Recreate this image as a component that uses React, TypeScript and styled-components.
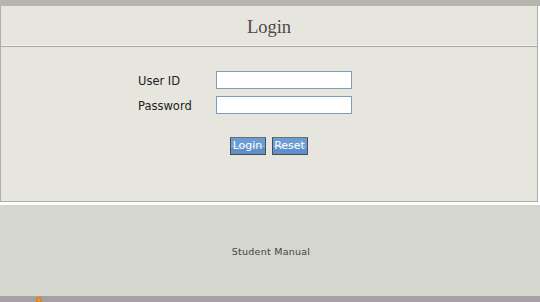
import React from 'react';
import styled, {createGlobalStyle} from 'styled-components';

const Global = createGlobalStyle`
  html, body {
    margin: 0;
    padding: 0;
    background: #ffffff;
  }
`;

const Page = styled.div`
  width: 540px;
  height: 302px;
  display: flex;
  flex-direction: column;
  overflow: hidden;
`;

const TopBar = styled.div`
  height: 6px;
  background: #b5b4ae;
`;

const Panel = styled.div`
  width: 536px;
  border: 1px solid #aeada7;
  border-top: none;
  background: #e6e5de;
`;

const Header = styled.div`
  height: 35px;
  display: flex;
  align-items: center;
  justify-content: center;
  border-bottom: 1px solid #f4f3ef;
  box-shadow: 0 1px 0 #a9a8a3;
  font-family: 'Liberation Serif', serif;
  font-size: 18.5px;
  color: #4a4a4a;
  padding-top: 4px;
`;

const Body = styled.div`
  height: 154px;
  margin-top: 1px;
  padding-top: 24px;
  box-sizing: border-box;
`;

const Form = styled.div`
  display: grid;
  grid-template-columns: 78px 136px;
  row-gap: 7px;
  margin-left: 137px;
  align-items: center;
`;

const Label = styled.label`
  font-family: 'DejaVu Sans', Verdana, sans-serif;
  font-size: 11.5px;
  color: #222;
  padding-top: 2px;
`;

const Input = styled.input`
  box-sizing: border-box;
  width: 136px;
  height: 18px;
  margin: 0;
  border: 1px solid #7f9db9;
  background: #fff;
  padding: 0 2px;
`;

const Buttons = styled.div`
  display: flex;
  justify-content: center;
  gap: 6px;
  margin-top: 23px;
  padding-right: 1px;
`;

const Button = styled.button<{w: number}>`
  width: ${(p) => p.w}px;
  height: 18px;
  padding: 0;
  border: 1px solid #4d4d4d;
  border-top-color: #6f6f6f;
  background: linear-gradient(
    to bottom,
    #6b9bd3 0,
    #6b9bd3 8px,
    #93b5de 8px,
    #93b5de 9px,
    #5e90cb 9px,
    #5e90cb 100%
  );
  color: #fff;
  font-family: 'DejaVu Sans', Tahoma, sans-serif;
  font-size: 11px;
  line-height: 16px;
`;

const Gap = styled.div`
  height: 3px;
`;

const Footer = styled.div`
  height: 91px;
  background: #d5d6cd;
  display: flex;
  align-items: center;
  justify-content: center;
  font-family: 'DejaVu Sans', Verdana, sans-serif;
  font-size: 9.5px;
  letter-spacing: 0.25px;
  color: #444;
  padding-top: 2px;
  padding-left: 2px;
  box-sizing: border-box;
`;

const BottomBar = styled.div`
  height: 6px;
  background: #a59fa6;
  position: relative;
`;

const Badge = styled.span`
  position: absolute;
  left: 36px;
  top: 1px;
  width: 6px;
  height: 6px;
  border-radius: 50%;
  background: #e8962e;
  box-shadow: inset 0 0 0 1px #d27a1a;
`;

export default function App() {
  return (
    <Page>
      <Global />
      <TopBar />
      <Panel>
        <Header>Login</Header>
        <Body>
          <Form>
            <Label>User ID</Label>
            <Input type="text" />
            <Label>Password</Label>
            <Input type="password" />
          </Form>
          <Buttons>
            <Button w={36}>Login</Button>
            <Button w={36}>Reset</Button>
          </Buttons>
        </Body>
      </Panel>
      <Gap />
      <Footer>Student Manual</Footer>
      <BottomBar>
        <Badge />
      </BottomBar>
    </Page>
  );
}
